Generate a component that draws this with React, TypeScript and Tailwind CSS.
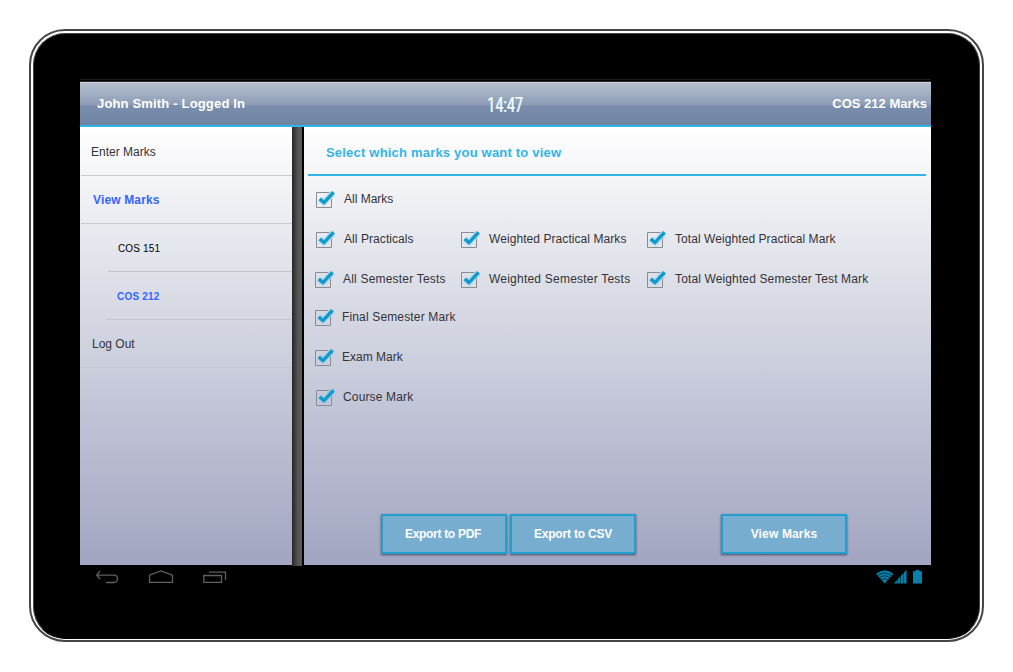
import React from "react";
import clsx from "clsx";

function CheckMark() {
  return (
    <svg width="22" height="20" viewBox="0 0 22 20" className="shrink-0" fill="none">
      <path d="M14.5 3.5H1.5V18.5H16.5V9" stroke="#8a8c94" />
      <path d="M5 10L9.2 13.4L18 4" stroke="#8ed4f4" strokeOpacity="0.35" strokeWidth="7" />
      <path d="M4.7 9.8L9 13.6L18.6 3.2" stroke="#149bce" strokeWidth="3.6" strokeLinejoin="round" />
    </svg>
  );
}

type OptionProps = { label: string; className?: string; textClass?: string };

function Option({ label, className, textClass = "ml-[7px] tracking-[0.07px]" }: OptionProps) {
  return (
    <label className={clsx("flex h-5 items-center", className)}>
      <CheckMark />
      <span className={clsx("whitespace-nowrap text-[12px] leading-5 text-[#333338]", textClass)}>
        {label}
      </span>
    </label>
  );
}

function ActionButton({ label, className }: { label: string; className?: string }) {
  return (
    <button
      className={clsx(
        "h-10 w-[126px] border-2 border-[#229fce] bg-[#77adcf] text-[12px] font-bold text-white shadow-[0_1px_2px_rgba(50,50,70,0.8)]",
        className,
      )}
    >
      {label}
    </button>
  );
}

function NavIcons() {
  return (
    <svg width="134" height="18" viewBox="0 0 134 18" fill="none" stroke="#606060" strokeWidth="1.3">
      <path d="M5 3L1.7 7.2L5 11M1.7 7.2H19C23.6 7.2 23.6 14.5 19 14.5H11" />
      <path d="M54.5 14.4V7.2L66 3L77.5 7.2V14.4Z" />
      <path d="M108.8 7.5H126.5V14.4H108.8ZM114 4.2H130.5V12" />
    </svg>
  );
}

function StatusIcons() {
  return (
    <svg width="48" height="18" viewBox="0 0 48 18" fill="none">
      <path d="M1 5.8Q9.7 -1.5 18.4 5.8L9.7 15.4Z" fill="#0380ab" />
      <path d="M2.8 7.5Q9.7 2.6 16.6 7.5M4.8 9.6Q9.7 6.2 14.6 9.6M6.6 11.7Q9.7 9.6 12.8 11.7" stroke="#000" strokeWidth="0.6" />
      <path d="M18.8 15.4L31.5 1.8V15.4Z" fill="#0380ab" />
      <path d="M22.5 2V16M25.5 2V16M28.5 2V16" stroke="#000" strokeWidth="0.5" />
      <path d="M38 3.3H40.5V2H44.5V3.3H47V15.4H38Z" fill="#0380ab" />
    </svg>
  );
}

export default function App() {
  return (
    <div className="h-[672px] w-[1013px] bg-white pl-[29px] pt-[29px] font-['Liberation_Sans',Arial,sans-serif]">
      <div className="h-[613px] w-[955px] rounded-[36px] border-2 border-[#464646] bg-white px-0.5 pb-px pt-0.5">
        <div className="h-full w-full rounded-[32px] border border-[#444] border-b-black bg-black pl-[46px] pt-[45px]">
          <div className="h-px w-[851px] bg-[#1b1a1c]" />
          <div className="mt-px w-[851px] border-t border-[#2b2830]">
            <header className="flex h-[45px] items-center border-b-2 border-t border-b-[#33b5e5] border-t-[#d0d2da] bg-[linear-gradient(#b3bfcf_0%,#8e9db6_52%,#7a8dac_54%,#6f84a3_100%)] text-[13px] font-bold text-white">
              <span className="w-[390px] pl-[17px] tracking-[0.17px]">John Smith - Logged In</span>
              <span className="w-[71px] pt-[3px] text-center">
                <span className="inline-block origin-center scale-x-[0.68] font-['Roboto',sans-serif] text-[21px] font-normal leading-[22px] [text-shadow:1px_0_0_rgba(120,230,230,0.5),-1px_0_0_rgba(255,255,255,0.4)]">
                  14:47
                </span>
              </span>
              <span className="flex-1 pr-1 text-right">COS 212 Marks</span>
            </header>
            <div className="flex h-[438px] bg-[linear-gradient(#ffffff_0%,#f0f1f5_16%,#dde0e8_35%,#c4c7d8_62%,#a1a5c1_100%)]">
              <nav className="w-[212px] pl-px text-[12px] text-[#333338]">
                <div className="flex h-[49px] items-center border-b border-[#c9cacd] pl-[10px] pt-0.5">Enter Marks</div>
                <div className="flex h-12 items-center border-b border-[#c9cacd] pl-3 font-bold tracking-[0.15px] text-[#3366ff]">
                  View Marks
                </div>
                <div className="ml-[27px] flex h-12 items-center border-b border-[#c3c5ca] pl-[10px] pt-0.5 text-[10px] tracking-[0.15px] text-black">
                  COS 151
                </div>
                <div className="ml-[26px] mr-px flex h-12 items-center border-b border-[#c3c5ca] pl-[10px] pt-0.5 text-[10px] font-bold tracking-[0.2px] text-[#3366ff]">
                  COS 212
                </div>
                <div className="flex h-12 items-center border-b border-[#c6c8d2] pl-[11px]">Log Out</div>
              </nav>
              <div className="-mb-px w-3 border-r-2 border-black bg-[linear-gradient(90deg,#262626,#555_60%,#585858)]" />
              <main className="w-[627px] pl-1">
                <h1 className="h-[49px] w-[618px] border-b-2 border-[#33b5e5] pl-[18px] text-[13px] font-bold leading-[51px] tracking-[0.2px] text-[#33b5e5]">
                  Select which marks you want to view
                </h1>
                <div className="grid grid-cols-[145px_186px_auto] pl-[7px] pt-[13px]">
                  <Option label="All Marks" className="col-span-3 mb-5" textClass="ml-[7px]" />
                  <Option label="All Practicals" />
                  <Option label="Weighted Practical Marks" />
                  <Option label="Total Weighted Practical Mark" />
                  <Option label="All Semester Tests" className="-ml-px mt-5" textClass="ml-[7px] tracking-[0.2px]" />
                  <Option label="Weighted Semester Tests" className="mt-5" textClass="ml-[7px] tracking-[0.22px]" />
                  <Option label="Total Weighted Semester Test Mark" className="mt-5" textClass="ml-[7px] tracking-[0.13px]" />
                  <Option label="Final Semester Mark" className="col-span-3 -ml-px mt-[18px]" textClass="ml-1.5 tracking-[0.15px]" />
                  <Option label="Exam Mark" className="col-span-3 -ml-px mt-5" textClass="ml-1.5" />
                  <Option label="Course Mark" className="col-span-3 mt-5" textClass="ml-1.5 tracking-[0.15px]" />
                </div>
                <div className="mt-[107px] flex pl-[73px]">
                  <ActionButton label="Export to PDF" className="pr-0.5 tracking-[-0.3px]" />
                  <ActionButton label="Export to CSV" className="ml-[3px] tracking-[-0.2px]" />
                  <ActionButton label="View Marks" className="ml-[85px] tracking-[0.15px]" />
                </div>
              </main>
            </div>
            <div className="flex justify-between pl-[15px] pr-2 pt-[3px]">
              <NavIcons />
              <StatusIcons />
            </div>
          </div>
        </div>
      </div>
    </div>
  );
}
